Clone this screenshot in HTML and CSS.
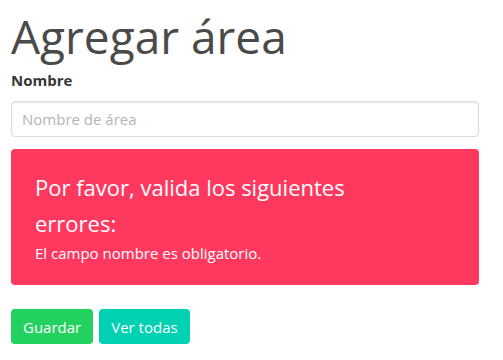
FILE: index.html
```html
<!DOCTYPE html>
<html lang="es">
<head>
<meta charset="utf-8">
<title>Agregar área</title>
<link rel="stylesheet" href="styles.css">
</head>
<body>
<main class="page">
  <h1 class="title">Agregar área</h1>
  <div class="field">
    <label class="label" for="nombre">Nombre</label>
    <input class="input" id="nombre" type="text" placeholder="Nombre de área">
  </div>
  <div class="notification">
    <h3 class="notif-title">Por favor, valida los siguientes errores:</h3>
    <p class="notif-text">El campo nombre es obligatorio.</p>
  </div>
  <div class="buttons">
    <button class="button is-success">Guardar</button>
    <button class="button is-primary">Ver todas</button>
  </div>
</main>
</body>
</html>
```
FILE: styles.css
```css
html, body {
  margin: 0;
  padding: 0;
  background: #fff;
}
body {
  font-family: "Open Sans", "Noto Sans", sans-serif;
  color: #4a4a4a;
  font-size: 16px;
}
.page {
  width: 468px;
  padding: 0 0 0 11px;
  display: flex;
  flex-direction: column;
}
.title {
  margin: 8px 0 0 0;
  font-size: 46px;
  font-weight: 400;
  line-height: 56px;
  color: #4a4a4a;
}
.field {
  margin-top: 4px;
  display: flex;
  flex-direction: column;
}
.label {
  font-weight: 700;
  color: #363636;
  font-size: 15px;
  line-height: 24px;
  margin-bottom: 9px;
}
.input {
  box-sizing: border-box;
  height: 36px;
  width: 100%;
  border: 1px solid #dbdbdb;
  border-radius: 4px;
  padding: 0 10px;
  font: inherit;
  font-size: 15px;
  color: #363636;
  box-shadow: inset 0 1px 2px rgba(10,10,10,0.1);
}
.input::placeholder {
  color: #b5b5b5;
}
.notification {
  margin-top: 12px;
  background: #ff3860;
  color: #fff;
  border-radius: 4px;
  padding: 20px 64px 20px 24px;
}
.notif-title {
  margin: 0;
  font-size: 22px;
  font-weight: 400;
  line-height: 36px;
}
.notif-text {
  margin: 0;
  font-size: 15px;
  line-height: 24px;
}
.buttons {
  margin-top: 24px;
  display: flex;
  gap: 6px;
}
.button {
  height: 35px;
  padding: 0 12px;
  border: none;
  border-radius: 4px;
  font: inherit;
  font-size: 15px;
  color: #fff;
  cursor: pointer;
}
.is-success {
  background: #23d160;
}
.is-primary {
  background: #00d1b2;
}
```
